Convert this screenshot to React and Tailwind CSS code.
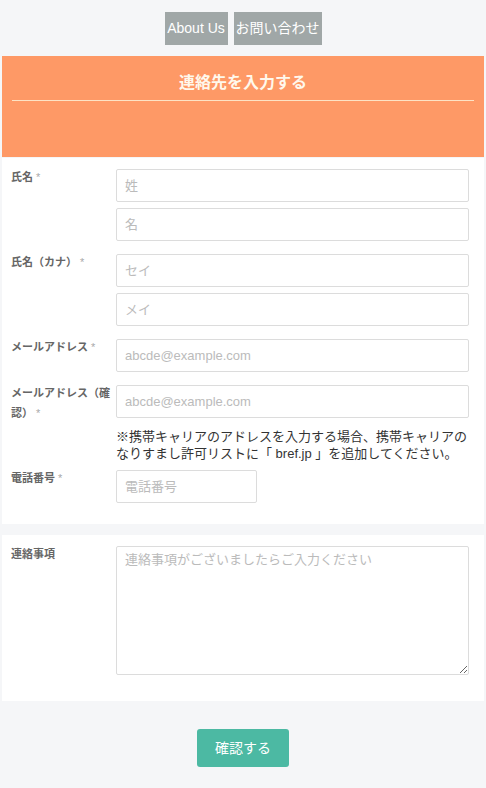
import React from 'react';

const jp = { fontFamily: '"Liberation Sans", "Noto Sans CJK JP", sans-serif' };

const Label = ({ children, required }) => (
  <div className="w-[105px] shrink-0 pr-[5px] text-[11px] leading-[20px] font-bold text-[#666] -mt-[2px]">
    {children}
    {required && <span className="text-[#aaa] font-normal"> *</span>}
  </div>
);

const Field = ({ placeholder, className = 'w-full' }) => (
  <input
    type="text"
    placeholder={placeholder}
    className={`${className} h-[33px] border border-[#dcdcdc] rounded-[2px] bg-white px-[8px] text-[13px] text-[#333] placeholder:text-[#bbb] outline-none`}
  />
);

const Row = ({ label, required, children }) => (
  <div className="flex">
    <Label required={required}>{label}</Label>
    <div className="flex-1 flex flex-col gap-[6px]">{children}</div>
  </div>
);

export default function App() {
  return (
    <div className="min-h-[788px] bg-[#f5f6f8]" style={jp}>
      {/* Top nav */}
      <nav className="flex justify-center gap-[6px] pt-[12px]">
        <a className="h-[33px] w-[63px] flex items-center justify-center bg-[#a0a7a7] text-white text-[14px]">About Us</a>
        <a className="h-[33px] w-[88px] flex items-center justify-center bg-[#a0a7a7] text-white text-[14px]">お問い合わせ</a>
      </nav>

      {/* Header */}
      <div className="mx-[2px] mt-[11px] h-[101px] bg-[#fe9966] px-[10px] pt-[15px]">
        <h1 className="text-center text-[16px] leading-[24px] font-bold text-[#fff8ec]">連絡先を入力する</h1>
        <div className="mt-[5px] border-t border-[#fde3c4]" />
      </div>

      {/* Form */}
      <div className="mx-[2px] mt-[1px] bg-white pl-[9px] pr-[15px] pt-[11px] pb-[21px] flex flex-col gap-[13px]">
        <Row label="氏名" required>
          <Field placeholder="姓" />
          <Field placeholder="名" />
        </Row>
        <Row label="氏名（カナ）" required>
          <Field placeholder="セイ" />
          <Field placeholder="メイ" />
        </Row>
        <Row label="メールアドレス" required>
          <Field placeholder="abcde@example.com" />
        </Row>
        <div className="flex flex-col gap-[8px]">
          <Row label="メールアドレス（確認）" required>
            <Field placeholder="abcde@example.com" />
            <p className="mt-[4px] text-[13px] leading-[17px] text-[#333]">
              ※携帯キャリアのアドレスを入力する場合、携帯キャリアのなりすまし許可リストに「 bref.jp 」を追加してください。
            </p>
          </Row>
          <Row label="電話番号" required>
            <Field placeholder="電話番号" className="w-[141px]" />
          </Row>
        </div>
      </div>

      <div className="mx-[2px] mt-[11px] bg-white pl-[9px] pr-[15px] pt-[11px] pb-[26px] flex">
        <Label>連絡事項</Label>
        <textarea
          placeholder="連絡事項がございましたらご入力ください"
          className="flex-1 h-[129px] border border-[#dcdcdc] rounded-[2px] px-[8px] py-[3px] text-[13px] leading-[20px] text-[#333] placeholder:text-[#bbb] outline-none"
        />
      </div>

      <div className="flex justify-center pt-[28px] pb-[22px]">
        <button className="w-[92px] h-[38px] rounded-[3px] bg-[#4cb9a3] text-white text-[14px]">確認する</button>
      </div>
    </div>
  );
}
